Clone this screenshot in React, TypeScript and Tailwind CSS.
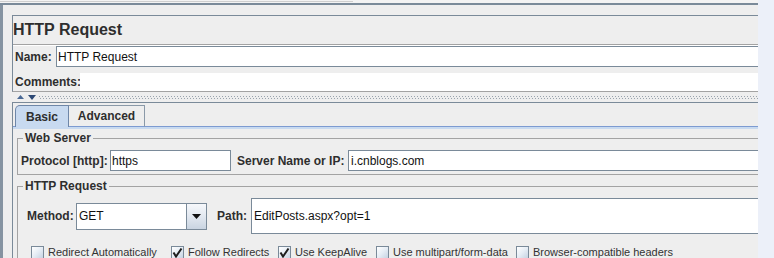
import React from "react";

function Check({ checked, label, w }: { checked?: boolean; label: string; w: string }) {
  return (
    <div className={`flex items-center shrink-0 ${w}`}>
      <div className="w-[13px] h-[13px] shrink-0 border border-[#7a8a99] bg-[linear-gradient(135deg,#ffffff_0%,#e6edf5_50%,#c6d3e2_100%)] flex items-center justify-center">
        {checked && (
          <svg width="11" height="11" viewBox="0 0 11 11">
            <path d="M1.5 5.5 L4 9.5 L9.5 1.5" stroke="#1e1e1e" strokeWidth="2" fill="none" />
          </svg>
        )}
      </div>
      <span className="ml-[4px] text-[11px] leading-none text-[#333333] whitespace-nowrap">{label}</span>
    </div>
  );
}

export default function App() {
  return (
    <div className="w-[774px] h-[258px] overflow-hidden flex bg-[#ecf0f9] font-['Liberation_Sans',Arial,sans-serif] text-[#2e2e2e]">
      <div className="w-[758px] h-[258px] shrink-0 flex flex-col bg-[#eeeeee] overflow-hidden">
        <div className="h-[3px] shrink-0 bg-[#f3f3f3] flex flex-col">
          <div className="mt-[1px] h-[1px] w-[353px] bg-[#cfcfcf]" />
        </div>
        <div className="h-[2px] shrink-0 bg-[#7a8a99]" />
        <div className="flex flex-1 min-h-0">
          <div className="w-[3px] shrink-0 bg-[#8593a1]" />
          <div className="flex-1 min-w-0 flex flex-col pl-[9px]">
            {/* Title / name / comments box */}
            <div className="mt-[10px] shrink-0 flex flex-col border-t border-l border-b border-t-[#7a8a99] border-l-[#7a8a99] border-b-[#a3a3a3]">
              <div className="h-[28px] flex items-center text-[16px] font-bold leading-none text-[#2e2e2e]">HTTP Request</div>
              <div className="h-[1px] bg-[#a3a3a3]" />
              <div className="h-[1px] bg-white" />
              <div className="h-[21px] flex">
                <div className="w-[43px] pl-[2px] flex items-center text-[12px] font-bold leading-none">Name:</div>
                <div className="flex-1 bg-white border-t border-l border-b border-[#7a8a99] flex items-center pl-[1px] text-[12px] leading-none text-[#111111]">
                  HTTP Request
                </div>
              </div>
              <div className="h-[6px]" />
              <div className="h-[18px] flex">
                <div className="w-[67px] pl-[2px] flex items-center text-[12px] font-bold leading-none">Comments:</div>
                <div className="flex-1 bg-white" />
              </div>
            </div>

            {/* splitter */}
            <div className="h-[10px] shrink-0 flex items-start pt-[3px]">
              <svg className="ml-[5px] shrink-0" width="7" height="4" viewBox="0 0 7 4">
                <path d="M0 4 L3.5 0 L7 4 Z" fill="#4a6894" />
              </svg>
              <svg className="ml-[4px] shrink-0" width="8" height="5" viewBox="0 0 8 5">
                <path d="M0 0 L8 0 L4 5 Z" fill="#2c4874" />
              </svg>
              <svg className="ml-[3px] flex-1" height="5">
                <defs>
                  <pattern id="dots" width="3" height="5" patternUnits="userSpaceOnUse">
                    <rect x="0" y="1" width="1" height="1" fill="#9aa4ae" />
                    <rect x="1" y="3" width="1" height="1" fill="#9aa4ae" />
                  </pattern>
                </defs>
                <rect width="100%" height="5" fill="url(#dots)" />
              </svg>
            </div>

            {/* tabbed pane */}
            <div className="flex-1 min-h-0 flex flex-col border-t border-l border-[#7a8a99] overflow-hidden">
              <div className="h-[2px] shrink-0" />
              <div className="h-[22px] shrink-0 flex">
                <div className="w-[2px] border-b border-[#7d9bd1]" />
                <div className="w-[54px] h-full bg-[#c8daf0] border-t border-l border-r border-[#6f87a8] rounded-tl-[5px] flex items-center justify-center text-[12px] font-bold leading-none">
                  Basic
                </div>
                <div className="w-[76px] h-full border-t border-r border-b border-t-[#8a99a8] border-r-[#8a99a8] border-b-[#7d9bd1] flex items-center justify-center text-[12px] font-bold leading-none">
                  Advanced
                </div>
                <div className="flex-1 border-b border-[#7d9bd1]" />
              </div>
              <div className="h-[2px] shrink-0 bg-[#c8daf0]" />

              <div className="flex-1 flex flex-col pl-[4px] pt-[2px]">
                <fieldset className="border-t border-l border-b border-[#a3a3a3] shrink-0">
                  <legend className="ml-[5px] px-[2px] text-[12px] font-bold leading-[14px]">Web Server</legend>
                  <div className="mt-[5px] mb-[3px] h-[21px] flex pl-[3px]">
                    <div className="w-[89px] flex items-center text-[12px] font-bold leading-none whitespace-nowrap">Protocol [http]:</div>
                    <div className="w-[121px] bg-white border border-[#7a8a99] flex items-center pl-[1px] text-[12px] leading-none text-[#111111]">https</div>
                    <div className="w-[117px] pl-[6px] flex items-center text-[12px] font-bold leading-none whitespace-nowrap">Server Name or IP:</div>
                    <div className="flex-1 bg-white border-t border-l border-b border-[#7a8a99] flex items-center pl-[2px] text-[12px] leading-none text-[#111111]">i.cnblogs.com</div>
                  </div>
                </fieldset>

                <fieldset className="mt-[4px] border-t border-l border-[#a3a3a3] flex-1">
                  <legend className="ml-[5px] px-[2px] text-[12px] font-bold leading-[14px]">HTTP Request</legend>
                  <div className="mt-[5px] h-[36px] flex items-center">
                    <div className="ml-[9px] w-[49px] text-[12px] font-bold leading-none">Method:</div>
                    <div className="w-[131px] h-[27px] flex border border-[#7a8a99] bg-white">
                      <div className="flex-1 flex items-center pl-[2px] text-[12px] leading-none text-[#111111]">GET</div>
                      <div className="w-[20px] border-l border-[#7a8a99] bg-[linear-gradient(180deg,#f6f8fb_0%,#e2e8f0_50%,#c9d4e1_100%)] flex items-center justify-center">
                        <svg width="9" height="5" viewBox="0 0 9 5">
                          <path d="M0 0 L9 0 L4.5 5 Z" fill="#111111" />
                        </svg>
                      </div>
                    </div>
                    <div className="w-[44px] pl-[10px] text-[12px] font-bold leading-none">Path:</div>
                    <div className="flex-1 h-[36px] bg-white border-t border-l border-b border-[#7a8a99] flex items-center pl-[2px] text-[12px] leading-none text-[#111111]">
                      EditPosts.aspx?opt=1
                    </div>
                  </div>
                  <div className="mt-[12px] flex pl-[13px]">
                    <Check w="w-[140px]" label="Redirect Automatically" />
                    <Check w="w-[107px]" checked label="Follow Redirects" />
                    <Check w="w-[98px]" checked label="Use KeepAlive" />
                    <Check w="w-[140px]" label="Use multipart/form-data" />
                    <Check w="w-[160px]" label="Browser-compatible headers" />
                  </div>
                </fieldset>
              </div>
            </div>
          </div>
        </div>
      </div>
    </div>
  );
}
